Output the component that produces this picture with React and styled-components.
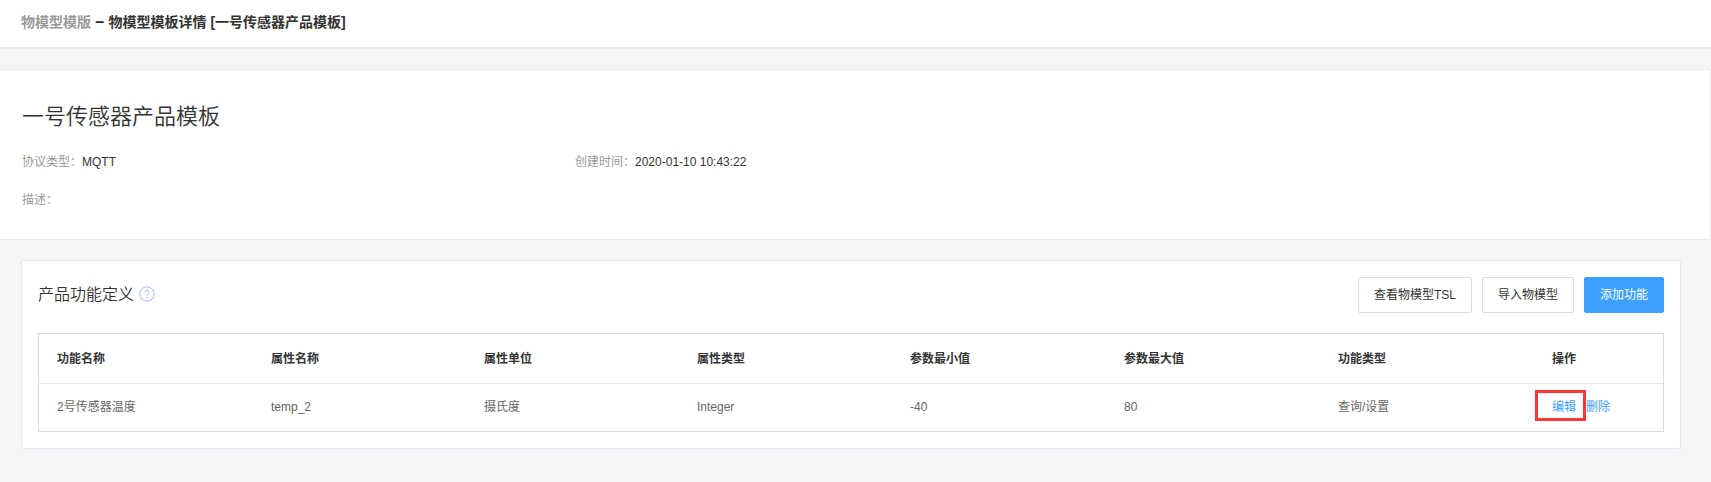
import React from 'react';
import styled, { createGlobalStyle } from 'styled-components';

const GlobalStyle = createGlobalStyle`
  * { box-sizing: border-box; }
  body {
    margin: 0;
    background: #f4f5f7;
    color: #333;
    font: 12px/20px "Liberation Sans", "Noto Sans CJK SC", sans-serif;
  }
`;

const Page = styled.div`
  min-height: 482px;
  background: #f4f5f7;
`;

const Breadcrumb = styled.header`
  display: flex;
  height: 49px;
  padding: 12px 21px 0;
  background: #fff;
  border-bottom: 2px solid #ebecec;
  font-size: 14px;
  font-weight: 700;
  white-space: pre;
`;

const Crumb = styled.span`
  color: #999;
`;

const Dash = styled.span`
  width: 17.5px;
  text-align: center;
  font-size: 16px;
`;

const Summary = styled.section`
  height: 171px;
  margin-top: 20px;
  padding: 31px 22px 0;
  background: #fff;
  border: solid #ebecec;
  border-width: 1px 1px 1px 0;
`;

const SummaryTitle = styled.h1`
  margin: 0;
  font-size: 22px;
  line-height: 32px;
  font-weight: 350;
`;

const Fields = styled.div`
  display: grid;
  grid-template-columns: 553px 1fr;
  row-gap: 18px;
  margin-top: 19px;
`;

const Label = styled.span`
  color: #999;
`;

const Panel = styled.section`
  height: 189px;
  margin: 20px 30px 0 21px;
  padding: 16px;
  background: #fff;
  border: 1px solid #e6e8eb;
  border-radius: 2px;
`;

const PanelHeader = styled.div`
  display: flex;
  align-items: center;
  height: 36px;
`;

const PanelTitle = styled.h2`
  margin: 0;
  font-size: 16px;
  line-height: 24px;
  font-weight: 350;
`;

const HelpIcon = styled.svg`
  width: 16px;
  height: 16px;
  margin: 0 0 2px 5px;
`;

const Actions = styled.div`
  display: flex;
  gap: 10px;
  margin-left: auto;
`;

const Button = styled.button`
  width: ${(p) => p.$width}px;
  height: 36px;
  padding: 0 0 1px;
  border: 1px solid ${(p) => (p.$primary ? '#3da0ff' : '#d9dce0')};
  border-radius: 2px;
  background: ${(p) => (p.$primary ? '#3da0ff' : '#fff')};
  color: ${(p) => (p.$primary ? '#fff' : '#333')};
  font: inherit;
  white-space: nowrap;
`;

const Table = styled.div`
  height: 99px;
  margin-top: 20px;
  border: 1px solid #d9dbde;
`;

const Row = styled.div`
  display: grid;
  grid-template-columns: 214px repeat(3, 213px) repeat(3, 214px) 1fr;
  align-items: center;
  height: ${(p) => (p.$head ? 50 : 46)}px;
  border-bottom: ${(p) => (p.$head ? '1px solid #e6e8eb' : '0')};
  color: ${(p) => (p.$head ? '#333' : '#666')};
  font-weight: ${(p) => (p.$head ? 700 : 400)};
`;

const Cell = styled.div`
  padding-left: 18px;
`;

const LinkCell = styled(Cell)`
  display: flex;
  gap: 10px;
`;

const Link = styled.a`
  position: relative;
  color: #3da0ff;
`;

const Highlight = styled.span`
  position: absolute;
  top: -7px;
  left: -17px;
  width: 51px;
  height: 31px;
  border: 3px solid #fb3838;
`;

const columns = ['功能名称', '属性名称', '属性单位', '属性类型', '参数最小值', '参数最大值', '功能类型', '操作'];
const values = ['2号传感器温度', 'temp_2', '摄氏度', 'Integer', '-40', '80', '查询/设置'];

export default function App() {
  return (
    <Page>
      <GlobalStyle />
      <Breadcrumb>
        <Crumb>物模型模版</Crumb>
        <Dash>–</Dash>
        <span>物模型模板详情 [一号传感器产品模板]</span>
      </Breadcrumb>
      <Summary>
        <SummaryTitle>一号传感器产品模板</SummaryTitle>
        <Fields>
          <div><Label>协议类型：</Label>MQTT</div>
          <div><Label>创建时间：</Label>2020-01-10 10:43:22</div>
          <div><Label>描述：</Label></div>
        </Fields>
      </Summary>
      <Panel>
        <PanelHeader>
          <PanelTitle>产品功能定义</PanelTitle>
          <HelpIcon viewBox="0 0 16 16" fill="none" stroke="#a3b4fb">
            <circle cx="8" cy="8" r="7.2" />
            <path d="M5.8 6.3C5.8 4.9 6.7 4.2 8 4.2s2.2.8 2.2 2C10.2 7.7 8 7.7 8 9.7M8 10.8v1.3" />
          </HelpIcon>
          <Actions>
            <Button $width={114}>查看物模型TSL</Button>
            <Button $width={92}>导入物模型</Button>
            <Button $width={80} $primary>添加功能</Button>
          </Actions>
        </PanelHeader>
        <Table>
          <Row $head>
            {columns.map((name) => <Cell key={name}>{name}</Cell>)}
          </Row>
          <Row>
            {values.map((value) => <Cell key={value}>{value}</Cell>)}
            <LinkCell>
              <Link>编辑<Highlight /></Link>
              <Link>删除</Link>
            </LinkCell>
          </Row>
        </Table>
      </Panel>
    </Page>
  );
}
